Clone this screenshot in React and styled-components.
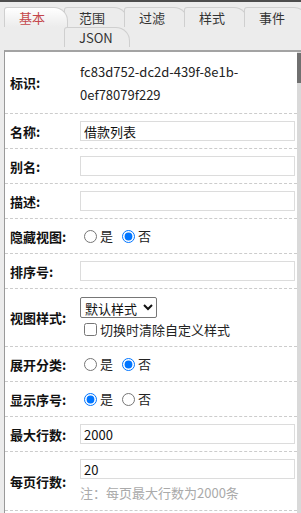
import React from "react";
import styled, { createGlobalStyle } from "styled-components";

const GlobalStyle = createGlobalStyle`
    html, body {
        margin: 0;
        padding: 0;
        background: #ececec;
        font-family: "Noto Sans CJK SC", "Liberation Sans", sans-serif;
        font-size: 13px;
        color: #222;
    }
    * {
        box-sizing: border-box;
    }
`;

const tabsTop = [
    { name: "基本", active: true },
    { name: "范围" },
    { name: "过滤" },
    { name: "样式" },
    { name: "事件" },
];

export default function App() {
    return (
        <Page>
            <GlobalStyle />
            <TopBar />
            <TabArea>
                <TabRow>
                    {tabsTop.map((t) => (
                        <Tab key={t.name} $active={t.active}>
                            {t.name}
                        </Tab>
                    ))}
                </TabRow>
                <TabRow $indent>
                    <Tab $wide>JSON</Tab>
                </TabRow>
            </TabArea>

            <Panel>
                <Form>
                    <Row>
                        <Label>标识:</Label>
                        <Value>
                            <IdText>fc83d752-dc2d-439f-8e1b-0ef78079f229</IdText>
                        </Value>
                    </Row>
                    <Row>
                        <Label>名称:</Label>
                        <Value>
                            <TextInput defaultValue="借款列表" />
                        </Value>
                    </Row>
                    <Row>
                        <Label>别名:</Label>
                        <Value>
                            <TextInput />
                        </Value>
                    </Row>
                    <Row>
                        <Label>描述:</Label>
                        <Value>
                            <TextInput />
                        </Value>
                    </Row>
                    <Row>
                        <Label>隐藏视图:</Label>
                        <Value>
                            <RadioGroup name="hide" checked="no" />
                        </Value>
                    </Row>
                    <Row>
                        <Label>排序号:</Label>
                        <Value>
                            <TextInput />
                        </Value>
                    </Row>
                    <Row>
                        <Label>视图样式:</Label>
                        <Value>
                            <Select defaultValue="default">
                                <option value="default">默认样式</option>
                            </Select>
                            <CheckLine>
                                <input type="checkbox" />
                                切换时清除自定义样式
                            </CheckLine>
                        </Value>
                    </Row>
                    <Row>
                        <Label>展开分类:</Label>
                        <Value>
                            <RadioGroup name="expand" checked="no" />
                        </Value>
                    </Row>
                    <Row>
                        <Label>显示序号:</Label>
                        <Value>
                            <RadioGroup name="serial" checked="yes" />
                        </Value>
                    </Row>
                    <Row>
                        <Label>最大行数:</Label>
                        <Value>
                            <TextInput defaultValue="2000" />
                        </Value>
                    </Row>
                    <Row>
                        <Label>每页行数:</Label>
                        <Value>
                            <TextInput defaultValue="20" />
                            <Note>注：每页最大行数为2000条</Note>
                        </Value>
                    </Row>
                </Form>
                <ScrollTrack>
                    <ScrollThumb />
                </ScrollTrack>
            </Panel>
        </Page>
    );
}

function RadioGroup({ name, checked }) {
    return (
        <RadioLine>
            <RadioLabel>
                <input type="radio" name={name} defaultChecked={checked === "yes"} />
                是
            </RadioLabel>
            <RadioLabel>
                <input type="radio" name={name} defaultChecked={checked === "no"} />
                否
            </RadioLabel>
        </RadioLine>
    );
}

const Page = styled.div`
    width: 301px;
    height: 513px;
    overflow: hidden;
    display: flex;
    flex-direction: column;
`;

const TopBar = styled.div`
    height: 2px;
    background: #4d4d4d;
    flex-shrink: 0;
`;

const TabArea = styled.div`
    padding: 5px 0 0 4px;
    flex-shrink: 0;
`;

const TabRow = styled.div`
    display: flex;
    height: 20px;
    padding-left: ${(p) => (p.$indent ? "60px" : "0")};
`;

const Tab = styled.div`
    position: relative;
    flex-shrink: 0;
    width: ${(p) => (p.$wide ? "66px" : "64px")};
    margin-right: -4px;
    height: 20px;
    padding-left: 14px;
    line-height: 20px;
    font-size: 13px;
    color: ${(p) => (p.$active ? "#c4474b" : "#333")};
    border: 1px solid #cfcfcf;
    border-bottom: none;
    border-radius: 3px 14px 0 0;
    background: ${(p) =>
        p.$active
            ? "linear-gradient(to bottom, #ffffff 0%, #f3f3f3 60%, #ececec 100%)"
            : "#ececec"};
    z-index: ${(p) => (p.$active ? 2 : 1)};
`;

const Panel = styled.div`
    margin: 3px 0 0 4px;
    flex: 1;
    display: flex;
    min-height: 0;
    background: #fff;
    border-top: 2px solid #a3a3a3;
    border-left: 1px solid #9a9a9a;
    overflow: hidden;
`;

const Form = styled.div`
    flex: 1;
    min-width: 0;
`;

const ScrollTrack = styled.div`
    width: 4px;
    flex-shrink: 0;
    background: #d9d9d9;
    padding-top: 1px;
`;

const ScrollThumb = styled.div`
    height: 30px;
    background: #707070;
`;

const Row = styled.div`
    display: flex;
    align-items: center;
    border-bottom: 1px dashed #cccccc;
    padding: 7px 2px 7px 0;
`;

const Label = styled.div`
    width: 75px;
    flex-shrink: 0;
    padding-left: 5px;
    font-weight: bold;
    font-size: 13px;
    color: #111;
`;

const Value = styled.div`
    flex: 1;
    min-width: 0;
    display: flex;
    flex-direction: column;
    align-items: flex-start;
`;

const IdText = styled.div`
    line-height: 23px;
    padding-top: 1px;
    font-size: 13px;
    color: #222;
`;

const TextInput = styled.input`
    width: 100%;
    height: 20px;
    border: 1px solid #dcdcdc;
    padding: 0 3px;
    font-family: inherit;
    font-size: 13px;
    color: #111;
    outline: none;
`;

const RadioLine = styled.div`
    height: 20px;
    display: flex;
    align-items: center;
    gap: 5px;
`;

const RadioLabel = styled.label`
    display: inline-flex;
    align-items: center;
    font-size: 13px;
    line-height: 20px;

    input {
        margin: 0 3px 0 4px;
        width: 13px;
        height: 13px;
    }
`;

const Select = styled.select`
    margin-top: 1px;
    height: 21px;
    width: 77px;
    font-family: inherit;
    font-size: 13px;
    padding: 0;
    border: 1px solid #767676;
    border-radius: 2px;
    background: #fff;
    color: #111;
`;

const CheckLine = styled.label`
    margin-top: 1px;
    height: 20px;
    display: flex;
    align-items: center;
    font-size: 13px;

    input {
        margin: 0 3px 0 4px;
        width: 13px;
        height: 13px;
    }
`;

const Note = styled.div`
    margin-top: 4px;
    line-height: 20px;
    font-size: 13px;
    color: #aaaaaa;
`;
